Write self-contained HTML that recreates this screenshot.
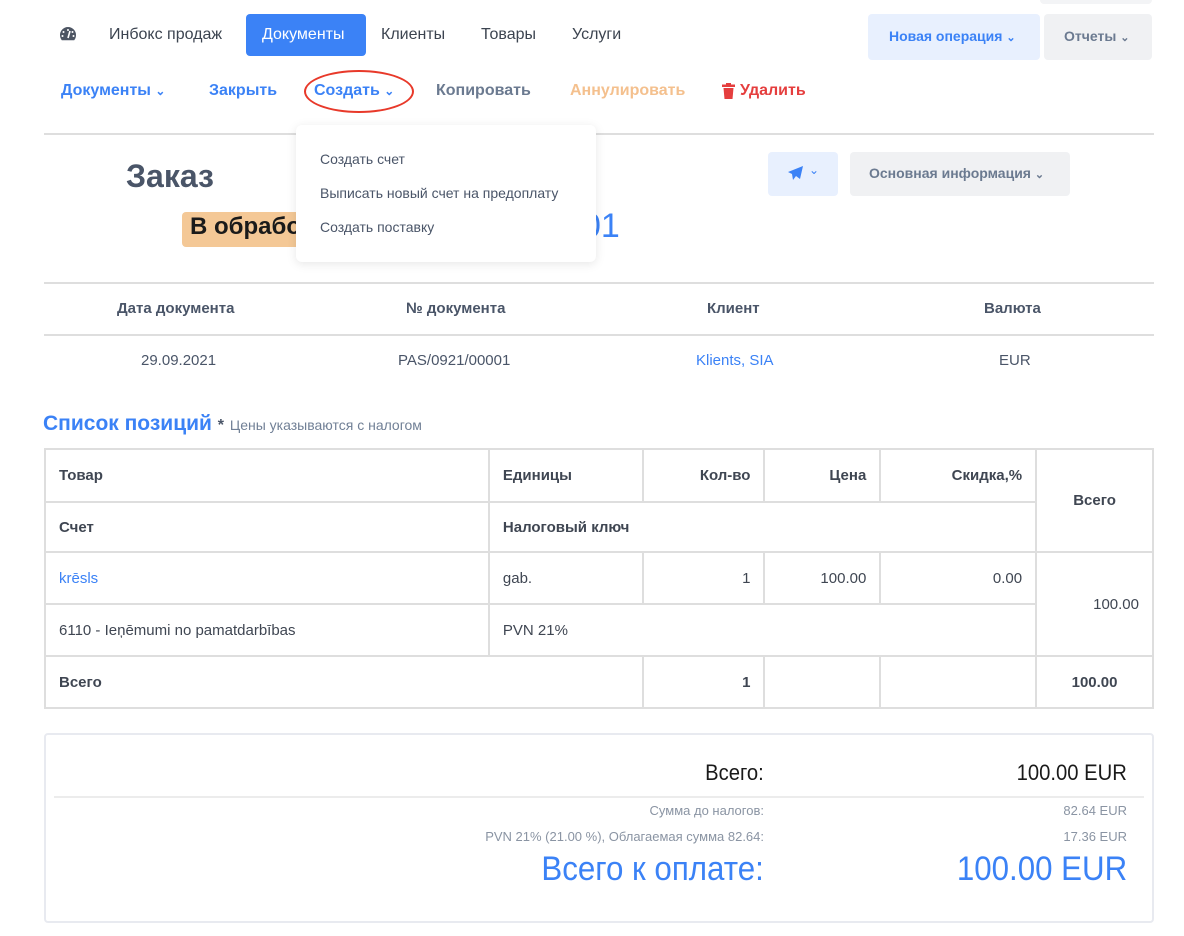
<!DOCTYPE html>
<html><head><meta charset="utf-8"><style>
*{margin:0;padding:0;box-sizing:border-box}
body{width:1184px;height:936px;background:#fff;font-family:"Liberation Sans",sans-serif;color:#4a5568;position:relative;overflow:hidden}
.a{position:absolute;white-space:nowrap}
.nav{font-size:16px;color:#3c4450;top:26px}
.tb{font-size:16px;font-weight:bold;top:82px}
table{position:absolute;left:44px;top:448px;border-collapse:collapse;width:1110px}
td{border:2px solid #dedede;font-size:15px;color:#3f4652;padding:0 13px;vertical-align:middle}
.r{text-align:right}
.b{font-weight:bold}
.sq{transform:scaleX(.92);transform-origin:right center}
</style></head><body>
<div class="a" style="left:1040px;top:-6px;width:112px;height:10px;background:#f3f4f6;border-radius:4px"></div>
<svg class="a" style="left:59px;top:26px" width="18" height="16" viewBox="0 0 18 16"><path d="M9 1a8 8 0 0 0-8 8c0 2 .7 3.8 1.8 5.2h12.4A8 8 0 0 0 17 9a8 8 0 0 0-8-8z" fill="#4d5563"/><circle cx="9" cy="4" r="1" fill="#fff"/><circle cx="4.5" cy="6" r="1" fill="#fff"/><circle cx="13.5" cy="6" r="1" fill="#fff"/><circle cx="3.5" cy="10" r="1" fill="#fff"/><circle cx="14.5" cy="10" r="1" fill="#fff"/><path d="M9 12L11 5" stroke="#fff" stroke-width="1.6"/></svg>
<div class="a nav" style="left:109px">Инбокс продаж</div>
<div class="a" style="left:246px;top:14px;width:120px;height:42px;background:#3b82f6;border-radius:4px"></div>
<div class="a nav" style="left:262px;color:#fff">Документы</div>
<div class="a nav" style="left:381px">Клиенты</div>
<div class="a nav" style="left:481px">Товары</div>
<div class="a nav" style="left:572px">Услуги</div>
<div class="a" style="left:868px;top:14px;width:172px;height:46px;background:#e8f0fe;border-radius:4px"></div>
<div class="a" style="left:889px;top:28px;font-size:14px;font-weight:bold;color:#3b82f6">Новая операция <span style="font-size:11px">⌄</span></div>
<div class="a" style="left:1044px;top:14px;width:108px;height:46px;background:#f0f1f3;border-radius:4px"></div>
<div class="a" style="left:1064px;top:28px;font-size:14px;font-weight:bold;color:#6b7a90">Отчеты <span style="font-size:11px">⌄</span></div>

<div class="a tb" style="left:61px;color:#3b82f6">Документы <span style="font-size:12px">⌄</span></div>
<div class="a tb" style="left:209px;color:#3b82f6">Закрыть</div>
<div class="a tb" style="left:314px;color:#3b82f6">Создать <span style="font-size:12px">⌄</span></div>
<div class="a" style="left:304px;top:70px;width:110px;height:43px;border:2px solid #e8392a;border-radius:50%"></div>
<div class="a tb" style="left:436px;color:#6b7a90">Копировать</div>
<div class="a tb" style="left:570px;color:#f4c08e">Аннулировать</div>
<svg class="a" style="left:722px;top:83px" width="13" height="16" viewBox="0 0 13 16"><rect x="0" y="1.5" width="13" height="2.5" fill="#e53e3e"/><rect x="4" y="0" width="5" height="2" fill="#e53e3e"/><path d="M1.5 5h10l-1 11h-8z" fill="#e53e3e"/></svg>
<div class="a tb" style="left:740px;color:#e53e3e">Удалить</div>

<div class="a" style="left:44px;top:133px;width:1110px;height:2px;background:#dedede"></div>
<div class="a" style="left:126px;top:158px;font-size:32px;font-weight:bold;color:#4a5568">Заказ</div>
<div class="a" style="left:182px;top:212px;width:130px;height:35px;background:#f4c896;border-radius:4px"></div>
<div class="a" style="left:190px;top:213px;font-size:24px;font-weight:bold;color:#1a1a1a">В обрабо</div>
<div class="a" style="left:582px;top:207px;font-size:34px;color:#3b82f6">01</div>

<div class="a" style="left:296px;top:125px;width:300px;height:137px;background:#fff;border-radius:6px;box-shadow:0 2px 10px rgba(0,0,0,.1)"></div>
<div class="a" style="left:320px;top:151px;font-size:14px;color:#4a5568">Создать счет</div>
<div class="a" style="left:320px;top:185px;font-size:14px;color:#4a5568">Выписать новый счет на предоплату</div>
<div class="a" style="left:320px;top:219px;font-size:14px;color:#4a5568">Создать поставку</div>

<div class="a" style="left:768px;top:152px;width:70px;height:44px;background:#e8f0fe;border-radius:4px"></div>
<svg class="a" style="left:788px;top:166px" width="15" height="14" viewBox="0 0 15 14"><path d="M15 0L0 6l4 2 1 6 3-4 4 3z" fill="#3b82f6"/></svg>
<div class="a" style="left:809px;top:163px;font-size:12px;color:#3b82f6">⌄</div>
<div class="a" style="left:850px;top:152px;width:220px;height:44px;background:#f0f1f3;border-radius:4px"></div>
<div class="a" style="left:869px;top:165px;font-size:14px;font-weight:bold;color:#6b7a90">Основная информация <span style="font-size:11px">⌄</span></div>

<div class="a" style="left:44px;top:282px;width:1110px;height:2px;background:#dedede"></div>
<div class="a" style="left:44px;top:334px;width:1110px;height:2px;background:#dedede"></div>
<div class="a b" style="left:117px;top:300px;font-size:15px">Дата документа</div>
<div class="a b" style="left:406px;top:300px;font-size:15px">№ документа</div>
<div class="a b" style="left:707px;top:300px;font-size:15px">Клиент</div>
<div class="a b" style="left:984px;top:300px;font-size:15px">Валюта</div>
<div class="a" style="left:141px;top:352px;font-size:15px">29.09.2021</div>
<div class="a" style="left:398px;top:352px;font-size:15px">PAS/0921/00001</div>
<div class="a" style="left:696px;top:352px;font-size:15px;color:#3b82f6">Klients, SIA</div>
<div class="a" style="left:999px;top:352px;font-size:15px">EUR</div>

<div class="a" style="left:43px;top:412px;font-size:21px;font-weight:bold;color:#3b82f6">Список позиций <span style="font-size:16px;color:#4a5568">*</span> <span style="font-size:14px;font-weight:normal;color:#718096">Цены указываются с налогом</span></div>

<table>
<colgroup><col style="width:445px"><col style="width:154px"><col style="width:122px"><col style="width:116px"><col style="width:156px"><col style="width:117px"></colgroup>
<tr style="height:53px"><td class="b">Товар</td><td class="b">Единицы</td><td class="b r">Кол-во</td><td class="b r">Цена</td><td class="b r">Скидка,%</td><td class="b" rowspan="2" style="text-align:center">Всего</td></tr>
<tr style="height:50px"><td class="b">Счет</td><td class="b" colspan="4">Налоговый ключ</td></tr>
<tr style="height:52px"><td style="color:#3b82f6">krēsls</td><td>gab.</td><td class="r">1</td><td class="r">100.00</td><td class="r">0.00</td><td rowspan="2" class="r">100.00</td></tr>
<tr style="height:52px"><td>6110 - Ieņēmumi no pamatdarbības</td><td colspan="4">PVN 21%</td></tr>
<tr style="height:52px"><td class="b" colspan="2">Всего</td><td class="b r">1</td><td></td><td></td><td class="b" style="text-align:center">100.00</td></tr>
</table>

<div class="a" style="left:44px;top:733px;width:1110px;height:190px;border:2px solid #e8eaf0;border-radius:4px"></div>
<div class="a" style="left:54px;top:796px;width:1090px;height:2px;background:#ececec"></div>
<div class="a sq" style="right:420px;top:760px;font-size:22px;color:#1a1a1a">Всего:</div>
<div class="a sq" style="right:57px;top:760px;font-size:22px;color:#1a1a1a">100.00 EUR</div>
<div class="a" style="right:420px;top:803px;font-size:13px;color:#8a94a3">Сумма до налогов:</div>
<div class="a" style="right:57px;top:803px;font-size:13px;color:#8a94a3">82.64 EUR</div>
<div class="a" style="right:420px;top:829px;font-size:13px;color:#8a94a3">PVN 21% (21.00 %), Облагаемая сумма 82.64:</div>
<div class="a" style="right:57px;top:829px;font-size:13px;color:#8a94a3">17.36 EUR</div>
<div class="a sq" style="right:420px;top:850px;font-size:34px;color:#3b82f6">Всего к оплате:</div>
<div class="a sq" style="right:57px;top:850px;font-size:34px;color:#3b82f6">100.00 EUR</div>
</body></html>
